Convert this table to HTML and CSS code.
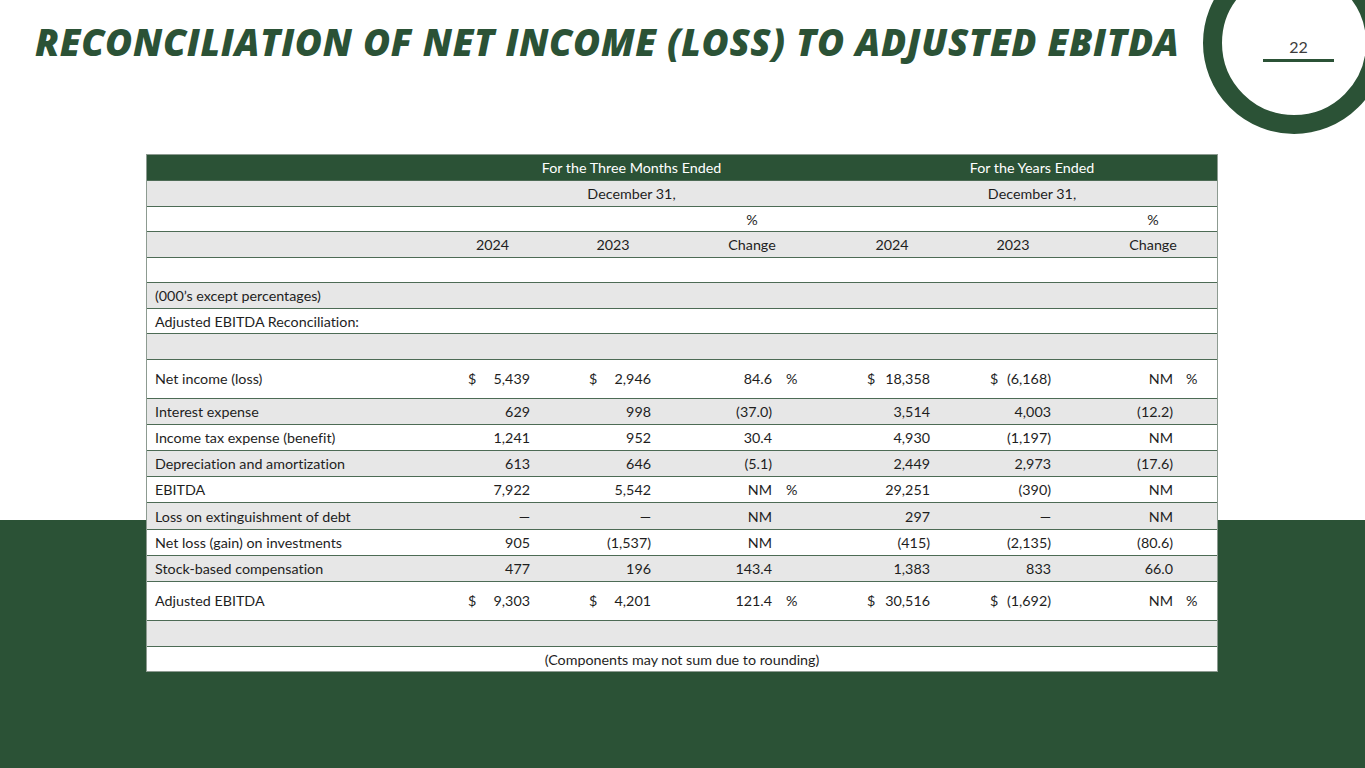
FILE: index.html
```html
<!DOCTYPE html>
<html lang="en">
<head>
<meta charset="utf-8">
<title>Reconciliation of Net Income (Loss) to Adjusted EBITDA</title>
<link rel="stylesheet" href="styles.css">
</head>
<body>
<div class="slide">
  <div class="ring"></div>
  <header class="top">
    <h1 class="title">RECONCILIATION OF NET INCOME (LOSS) TO ADJUSTED EBITDA</h1>
    <div class="pageno">22</div>
  </header>

  <section class="tbl">
    <div class="row head">
      <div class="lbl"></div>
      <div class="span-q">For the Three Months Ended</div>
      <div class="span-y">For the Years Ended</div>
    </div>
    <div class="row gray">
      <div class="lbl"></div>
      <div class="span-q">December 31,</div>
      <div class="span-y">December 31,</div>
    </div>
    <div class="row">
      <div class="lbl"></div>
      <div class="h-a"></div><div class="h-b"></div>
      <div class="h-c">%</div>
      <div class="h-d"></div><div class="h-e"></div>
      <div class="h-f">%</div>
    </div>
    <div class="row gray">
      <div class="lbl"></div>
      <div class="h-a">2024</div><div class="h-b">2023</div>
      <div class="h-c">Change</div>
      <div class="h-d">2024</div><div class="h-e">2023</div>
      <div class="h-f">Change</div>
    </div>
    <div class="row"><div class="lbl"></div></div>
    <div class="row gray"><div class="lbl">(000’s except percentages)</div></div>
    <div class="row"><div class="lbl">Adjusted EBITDA Reconciliation:</div></div>
    <div class="row gray"><div class="lbl"></div></div>

    <div class="row tall">
      <div class="lbl">Net income (loss)</div>
      <div class="v a"><span class="cur">$</span>5,439</div>
      <div class="v b"><span class="cur">$</span>2,946</div>
      <div class="v c">84.6</div><div class="p">%</div>
      <div class="v d"><span class="cur">$</span>18,358</div>
      <div class="v e"><span class="cur">$</span>(6,168)</div>
      <div class="v f">NM</div><div class="p">%</div>
    </div>
    <div class="row gray m">
      <div class="lbl">Interest expense</div>
      <div class="v a">629</div><div class="v b">998</div>
      <div class="v c">(37.0)</div><div class="p"></div>
      <div class="v d">3,514</div><div class="v e">4,003</div>
      <div class="v f">(12.2)</div><div class="p"></div>
    </div>
    <div class="row m">
      <div class="lbl">Income tax expense (benefit)</div>
      <div class="v a">1,241</div><div class="v b">952</div>
      <div class="v c">30.4</div><div class="p"></div>
      <div class="v d">4,930</div><div class="v e">(1,197)</div>
      <div class="v f">NM</div><div class="p"></div>
    </div>
    <div class="row gray m">
      <div class="lbl">Depreciation and amortization</div>
      <div class="v a">613</div><div class="v b">646</div>
      <div class="v c">(5.1)</div><div class="p"></div>
      <div class="v d">2,449</div><div class="v e">2,973</div>
      <div class="v f">(17.6)</div><div class="p"></div>
    </div>
    <div class="row m">
      <div class="lbl">EBITDA</div>
      <div class="v a">7,922</div><div class="v b">5,542</div>
      <div class="v c">NM</div><div class="p">%</div>
      <div class="v d">29,251</div><div class="v e">(390)</div>
      <div class="v f">NM</div><div class="p"></div>
    </div>
    <div class="row gray m">
      <div class="lbl">Loss on extinguishment of debt</div>
      <div class="v a">—</div><div class="v b">—</div>
      <div class="v c">NM</div><div class="p"></div>
      <div class="v d">297</div><div class="v e">—</div>
      <div class="v f">NM</div><div class="p"></div>
    </div>
    <div class="row m">
      <div class="lbl">Net loss (gain) on investments</div>
      <div class="v a">905</div><div class="v b">(1,537)</div>
      <div class="v c">NM</div><div class="p"></div>
      <div class="v d">(415)</div><div class="v e">(2,135)</div>
      <div class="v f">(80.6)</div><div class="p"></div>
    </div>
    <div class="row gray m">
      <div class="lbl">Stock-based compensation</div>
      <div class="v a">477</div><div class="v b">196</div>
      <div class="v c">143.4</div><div class="p"></div>
      <div class="v d">1,383</div><div class="v e">833</div>
      <div class="v f">66.0</div><div class="p"></div>
    </div>
    <div class="row tall">
      <div class="lbl">Adjusted EBITDA</div>
      <div class="v a"><span class="cur">$</span>9,303</div>
      <div class="v b"><span class="cur">$</span>4,201</div>
      <div class="v c">121.4</div><div class="p">%</div>
      <div class="v d"><span class="cur">$</span>30,516</div>
      <div class="v e"><span class="cur">$</span>(1,692)</div>
      <div class="v f">NM</div><div class="p">%</div>
    </div>
    <div class="row gray m"><div class="lbl"></div></div>
    <div class="row last">
      <div class="note">(Components may not sum due to rounding)</div>
    </div>
  </section>
</div>
</body>
</html>
```

FILE: styles.css
```css
html, body {
  margin: 0;
  padding: 0;
  width: 1365px;
  height: 768px;
  overflow: hidden;
}

body {
  background: linear-gradient(to bottom, #ffffff 0, #ffffff 520px, #2b5236 520px, #2b5236 100%);
  font-family: "Lato", "Liberation Sans", sans-serif;
  color: #1e1e1e;
  font-variant-ligatures: none;
}

.slide {
  position: relative;
  width: 1365px;
  height: 768px;
}

.ring {
  position: absolute;
  left: 1203px;
  top: -48px;
  width: 182px;
  height: 182px;
  box-sizing: border-box;
  border: 19px solid #2b5236;
  border-radius: 50%;
}

.top {
  display: flex;
  align-items: flex-start;
  height: 155px;
  box-sizing: border-box;
  padding: 20px 31px 0 35px;
}

.title {
  margin: 0;
  font-family: "Open Sans", "Liberation Sans", sans-serif;
  font-style: italic;
  font-weight: 800;
  font-size: 37px;
  line-height: 44px;
  letter-spacing: 0.65px;
  color: #2b5236;
  white-space: nowrap;
}

.pageno {
  position: relative;
  margin-left: auto;
  margin-top: 18px;
  width: 71px;
  padding-bottom: 3px;
  border-bottom: 3px solid #2b5236;
  text-align: center;
  font-size: 16px;
  line-height: 18px;
  color: #3c3c3c;
}

.tbl {
  margin-left: 147px;
  width: 1070px;
  outline: 1px solid #8d9b91;
  font-size: 14.3px;
}

.row {
  display: grid;
  grid-template-columns: 293px 105px 136px 95px 47px 138px 104px 111px 41px;
  height: 25.5px;
  align-items: center;
  background: #ffffff;
  border-bottom: 1.5px solid #4d6b55;
  box-sizing: border-box;
}

.row.m {
  height: 26.1px;
}

.row.gray {
  background: #e7e7e7;
}

.row.tall {
  height: 39.2px;
}

.row.last {
  height: 24px;
  border-bottom: none;
}

.row.head {
  height: 26.4px;
  background: #2b5236;
  color: #ffffff;
}

.lbl {
  padding-left: 8px;
  white-space: nowrap;
}

.span-q {
  grid-column: 2 / 6;
  text-align: center;
}

.span-y {
  grid-column: 6 / 10;
  text-align: center;
  padding-left: 24px;
}

.h-a { grid-column: 2; text-align: center; }
.h-b { grid-column: 3; text-align: center; }
.h-c { grid-column: 4 / 6; text-align: center; }
.h-d { grid-column: 6; text-align: center; }
.h-e { grid-column: 7; text-align: center; }
.h-f { grid-column: 8 / 10; text-align: center; padding-left: 24px; }

.v {
  display: flex;
  justify-content: flex-end;
  white-space: nowrap;
}

.cur {
  margin-right: auto;
}

.v.a { padding: 0 15px 0 28px; }
.v.b { padding: 0 30px 0 44px; }
.v.c { padding: 0 4px 0 0; }
.v.d { padding: 0 31px 0 44px; }
.v.e { padding: 0 14px 0 29px; }
.v.f { padding: 0 3px 0 0; }

.p {
  padding-left: 10px;
}

.note {
  grid-column: 1 / 10;
  text-align: center;
}
```
